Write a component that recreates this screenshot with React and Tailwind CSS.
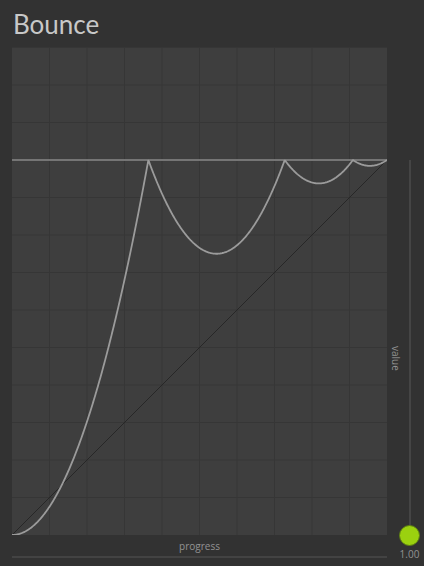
import React from "react";

const W = 375;
const H = 488;
const CELL = 37.5;

const bounce = (t) => {
  const n = 7.5625;
  const d = 2.75;
  if (t < 1 / d) return n * t * t;
  if (t < 2 / d) return n * (t -= 1.5 / d) * t + 0.75;
  if (t < 2.5 / d) return n * (t -= 2.25 / d) * t + 0.9375;
  return n * (t -= 2.625 / d) * t + 0.984375;
};

const curvePath = () => {
  const pts = [];
  for (let i = 0; i <= 600; i++) {
    const t = i / 600;
    pts.push(`${(t * W).toFixed(2)},${(H - bounce(t) * W).toFixed(2)}`);
  }
  return "M" + pts.join(" L");
};

const Chart = () => {
  const cols = [];
  for (let x = CELL; x < W; x += CELL) cols.push(x);
  const rows = [];
  for (let y = H - CELL; y > 0; y -= CELL) rows.push(y);

  return (
    <svg width={W} height={H} className="block">
      <rect width={W} height={H} fill="#3e3e3e" />
      {cols.map((x) => (
        <line key={"c" + x} x1={x} y1={0} x2={x} y2={H} stroke="#363636" strokeWidth="1" />
      ))}
      {rows.map((y) => (
        <line key={"r" + y} x1={0} y1={y} x2={W} y2={y} stroke="#363636" strokeWidth="1" />
      ))}
      <line x1={0} y1={H - W} x2={W} y2={H - W} stroke="#8a8a8a" strokeWidth="1.6" />
      <line x1={0} y1={H} x2={W} y2={H - W} stroke="#272727" strokeWidth="1" />
      <path d={curvePath()} fill="none" stroke="#9b9b9b" strokeWidth="1.8" strokeLinejoin="round" />
    </svg>
  );
};

export default function App() {
  return (
    <div className="w-[424px] h-[566px] bg-[#323232] overflow-hidden font-['Lato','Open_Sans',sans-serif]">
      <div className="h-[47px] pl-[13px] pt-[11px]">
        <h1 className="text-[26px] leading-none text-[#c8c8c8]">Bounce</h1>
      </div>

      <div className="flex">
        <div className="ml-[12px] w-[375px] flex flex-col">
          <Chart />
          <div className="h-[21px] flex items-center justify-center font-['Open_Sans',sans-serif] text-[10px] text-[#939393] pt-[2px]">
            progress
          </div>
          <div className="h-[2px] bg-[#434343]" />
        </div>

        <div className="flex pt-[113px] font-['Open_Sans',sans-serif]">
          <div className="w-[18px] h-[375px] flex items-center justify-center pt-[22px]">
            <span className="[writing-mode:vertical-rl] text-[10px] leading-none text-[#939393]">
              value
            </span>
          </div>
          <div className="w-[9px] flex flex-col items-center">
            <div className="w-[2px] h-[375px] bg-[#454545]" />
            <div className="w-[21px] h-[21px] shrink-0 -mt-[10px] rounded-full bg-[#9bd10f] border-[1.5px] border-[#5d7e14]" />
            <div className="mt-[3px] text-[10px] leading-none text-[#939393] whitespace-nowrap">1.00</div>
          </div>
        </div>
      </div>
    </div>
  );
}
